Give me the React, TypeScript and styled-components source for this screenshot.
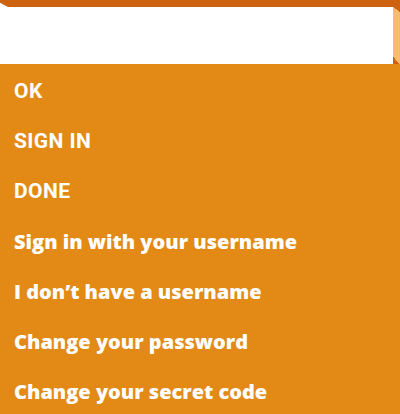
import React from "react";
import styled, { createGlobalStyle } from "styled-components";

const GlobalStyle = createGlobalStyle`
    html, body {
        margin: 0;
        padding: 0;
        background: #e28a15;
    }
`;

const items: { label: string; caps: boolean }[] = [
    { label: "OK", caps: true },
    { label: "SIGN IN", caps: true },
    { label: "DONE", caps: true },
    { label: "Sign in with your username", caps: false },
    { label: "I don\u2019t have a username", caps: false },
    { label: "Change your password", caps: false },
    { label: "Change your secret code", caps: false },
];

export default function App() {
    return (
        <>
            <GlobalStyle />
            <Page>
                <Header>
                    <TopFace />
                    <FrontRow>
                        <Front />
                        <SideFace />
                    </FrontRow>
                </Header>
                <List>
                    {items.map((item) => (
                        <Item key={item.label} caps={item.caps}>
                            {item.label}
                        </Item>
                    ))}
                </List>
            </Page>
        </>
    );
}

const Page = styled.div`
    width: 400px;
    height: 414px;
    overflow: hidden;
    background-color: #e28a15;
    display: flex;
    flex-direction: column;
`;

const Header = styled.div`
    height: 64px;
    display: flex;
    flex-direction: column;
    background-color: #ffffff;
`;

const TopFace = styled.div`
    height: 7px;
    background-color: #cd6210;
    clip-path: polygon(0 0, 100% 0, 100% 100%, 8px 100%, 0 40%);
`;

const FrontRow = styled.div`
    flex: 1;
    display: flex;
    flex-direction: row;
`;

const Front = styled.div`
    flex: 1;
    background-color: #ffffff;
`;

const SideFace = styled.div`
    width: 7px;
    background-color: #f7bb73;
    background-image:
        linear-gradient(to top right, transparent 50%, #cd6210 50%),
        linear-gradient(to top right, #cd6210 50%, transparent 50%);
    background-size: 7px 5px, 7px 7px;
    background-position: top left, bottom left;
    background-repeat: no-repeat;
`;

const List = styled.div`
    display: flex;
    flex-direction: column;
    padding: 0 14px;
`;

const Item = styled.div<{ caps: boolean }>`
    height: 50px;
    display: flex;
    align-items: center;
    padding-top: 4px;
    box-sizing: border-box;
    color: #ffffff;
    font-family: ${(p) => (p.caps ? "Roboto" : "\"Open Sans\"")}, "Liberation Sans", sans-serif;
    font-weight: ${(p) => (p.caps ? 700 : 800)};
    font-size: ${(p) => (p.caps ? "21px" : "20px")};
    letter-spacing: ${(p) => (p.caps ? "0.4px" : "0")};
    white-space: nowrap;
`;
